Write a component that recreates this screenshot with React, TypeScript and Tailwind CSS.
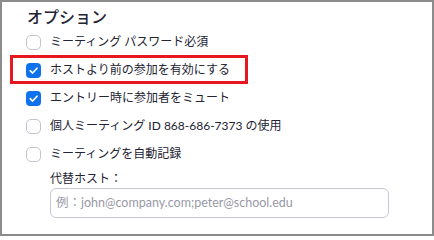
const font = {
  fontFamily: '"Noto Sans CJK JP", "Noto Sans", sans-serif',
};

const latin = {
  fontFamily: 'Lato, "Noto Sans CJK JP", sans-serif',
};

const options = [
  { label: "ミーティング パスワード必須", checked: false },
  { label: "ホストより前の参加を有効にする", checked: true },
  { label: "エントリー時に参加者をミュート", checked: true },
  { label: "個人ミーティング ID 868-686-7373 の使用", checked: false },
  { label: "ミーティングを自動記録", checked: false },
];

function Checkbox({ checked }: { checked: boolean }) {
  if (checked) {
    return (
      <span className="flex h-[15px] w-[15px] shrink-0 items-center justify-center rounded-[4px] bg-[#0e72ed]">
        <svg width="11" height="11" viewBox="0 0 10 10" fill="none">
          <path
            d="M2 5.2 L4.2 7.3 L8.2 2.9"
            stroke="white"
            strokeWidth="1.5"
            strokeLinecap="round"
            strokeLinejoin="round"
          />
        </svg>
      </span>
    );
  }
  return (
    <span className="h-[15px] w-[15px] shrink-0 rounded-[5px] border border-[#c4c3d0] bg-white" />
  );
}

export default function App() {
  return (
    <div
      className="relative h-[236px] w-[434px] overflow-hidden border-2 border-[#8c8c8c] bg-white text-[#232333]"
      style={font}
    >
      {/* Title */}
      <div className="mt-[2px] pl-[25px] text-[16px] font-medium leading-6">
        オプション
      </div>

      {/* Option rows */}
      <div className="flex flex-col">
        {options.map((o) => (
          <div key={o.label} className="flex h-[28px] items-center pl-[24px]">
            <div className="flex w-[24px] items-center">
              <Checkbox checked={o.checked} />
            </div>
            <span className="text-[12px] leading-none" style={latin}>
              {o.label}
            </span>
          </div>
        ))}
      </div>

      {/* Alternative host */}
      <div className="pl-[48px]">
        <div className="flex h-[20px] items-center text-[12px] leading-none">
          代替ホスト：
        </div>
        <div
          className="flex h-[30px] w-[339px] items-center rounded-[6px] border border-[#c8c6d8] px-[5px] text-[12.5px] text-[#9a99a6]"
          style={latin}
        >
          例：john@company.com;peter@school.edu
        </div>
      </div>

      {/* Highlight annotation */}
      <div className="pointer-events-none absolute left-[8px] top-[53px] h-[29px] w-[238px] border-[3px] border-[#e8161e]" />
    </div>
  );
}
